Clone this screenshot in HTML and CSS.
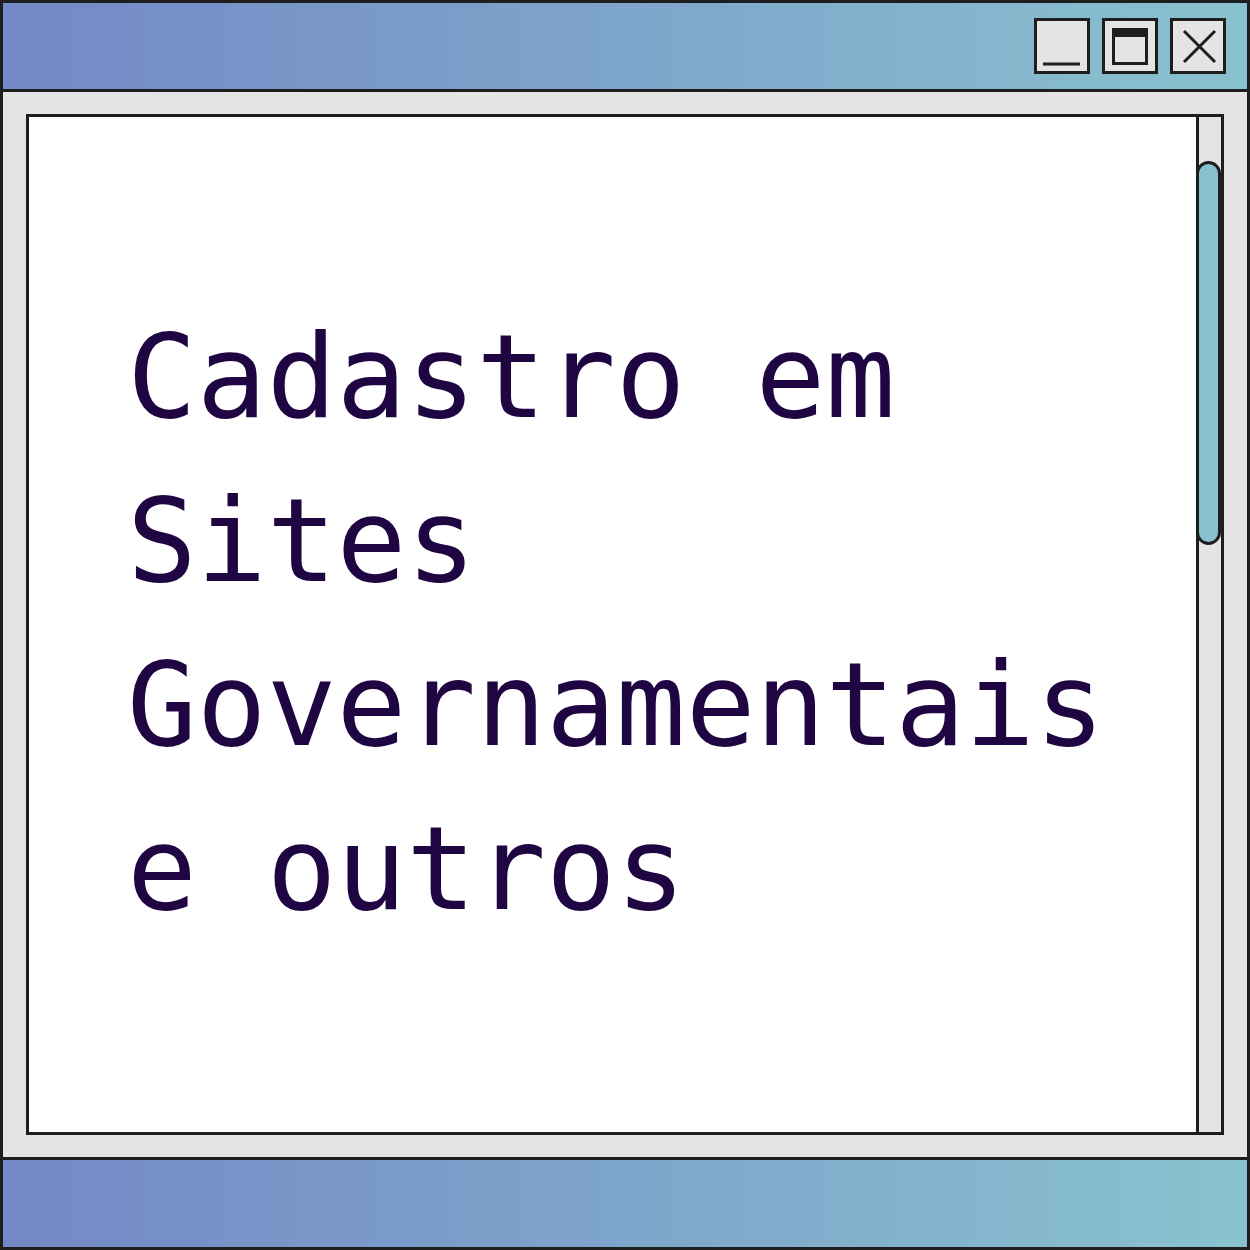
FILE: index.html
```html
<!DOCTYPE html>
<html lang="pt">
<head>
<meta charset="utf-8">
<title>Cadastro em Sites Governamentais e outros</title>
<link rel="stylesheet" href="styles.css">
</head>
<body>
<div class="window">
  <div class="titlebar">
    <div class="btn">
      <svg width="50" height="50" viewBox="0 0 50 50"><rect x="6" y="41.5" width="37" height="3" fill="#1e1e1e"/></svg>
    </div>
    <div class="btn">
      <svg width="50" height="50" viewBox="0 0 50 50"><rect x="8.5" y="8.5" width="33" height="34" fill="none" stroke="#1e1e1e" stroke-width="3"/><rect x="7" y="7" width="36" height="9" fill="#1e1e1e"/></svg>
    </div>
    <div class="btn">
      <svg width="50" height="50" viewBox="0 0 50 50"><path d="M11 10 L42 41 M42 10 L11 41" stroke="#1e1e1e" stroke-width="3" fill="none"/></svg>
    </div>
  </div>
  <div class="body">
    <div class="panel">
      <div class="content">
        <h1 class="title">Cadastro em<br>Sites<br>Governamentais<br>e outros</h1>
      </div>
      <div class="track">
        <div class="thumb"></div>
      </div>
    </div>
  </div>
  <div class="footer"></div>
</div>
</body>
</html>
```
FILE: styles.css
```css
html, body {
  margin: 0;
  padding: 0;
}
.window {
  width: 1250px;
  height: 1250px;
  box-sizing: border-box;
  border: 3px solid #1e1e1e;
  display: flex;
  flex-direction: column;
  background: #e4e4e4;
}
.titlebar {
  height: 86px;
  flex: none;
  border-bottom: 3px solid #1e1e1e;
  background: linear-gradient(to right, #7388c6, #89c2cf);
  display: flex;
  align-items: center;
  justify-content: flex-end;
  gap: 12px;
  padding-right: 21px;
}
.btn {
  width: 56px;
  height: 56px;
  box-sizing: border-box;
  border: 3px solid #1e1e1e;
  background: #e4e4e4;
}
.btn svg {
  display: block;
}
.body {
  flex: 1;
  padding: 22px 23px;
  display: flex;
  min-height: 0;
}
.panel {
  flex: 1;
  border: 3px solid #1e1e1e;
  background: #ffffff;
  display: flex;
}
.content {
  flex: 1;
  padding: 178px 0 0 98px;
}
.title {
  margin: 0;
  font-family: "DejaVu Sans Mono", "Liberation Mono", monospace;
  font-weight: normal;
  font-size: 116px;
  line-height: 164px;
  color: #1f0541;
}
.track {
  width: 22px;
  border-left: 3px solid #1e1e1e;
  background: #e4e4e4;
  padding-top: 44px;
}
.thumb {
  height: 384px;
  margin-left: -3px;
  box-sizing: border-box;
  width: 25px;
  border: 3px solid #1e1e1e;
  border-radius: 13px;
  background: #88c1cf;
}
.footer {
  height: 87px;
  flex: none;
  border-top: 3px solid #1e1e1e;
  background: linear-gradient(to right, #7388c6, #89c2cf);
}
```
